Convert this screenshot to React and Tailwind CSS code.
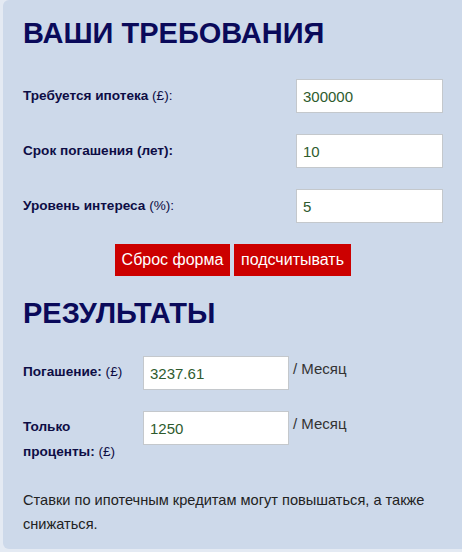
export default function App() {
  const font = { fontFamily: '"Liberation Sans", Arial, sans-serif' };
  return (
    <div className="w-[462px] h-[552px] bg-[#e4eaf3] pl-[3px] overflow-hidden" style={font}>
      <div className="w-[470px] h-[549px] bg-[#cdd9ea] rounded-l-[6px] pl-[20px] pr-[19px] pt-[18px]">
        <h1 className="text-[29px] leading-[30px] font-bold text-[#0a0a5a]">ВАШИ ТРЕБОВАНИЯ</h1>

        <form className="mt-[31px] w-[420px]">
          <div className="flex flex-col gap-[21px]">
            <Row label="Требуется ипотека" unit="(£):" value="300000" />
            <Row label="Срок погашения (лет):" value="10" />
            <Row label="Уровень интереса" unit="(%):" value="5" />
          </div>

          <div className="flex justify-center gap-[4px] mt-[21px]">
            <button type="reset" className="h-[32px] w-[115px] bg-[#cc0000] text-white text-[16px]">
              Сброс форма
            </button>
            <button type="button" className="h-[32px] w-[117px] bg-[#cc0000] text-white text-[16px]">
              подсчитывать
            </button>
          </div>
        </form>

        <h2 className="mt-[22px] text-[29px] leading-[30px] font-bold text-[#0a0a5a]">РЕЗУЛЬТАТЫ</h2>

        <div className="mt-[28px] flex flex-col gap-[21px]">
          <Result label="Погашение:" value="3237.61" />
          <Result label="Только проценты:" value="1250" />
        </div>

        <p className="mt-[24px] w-[420px] text-[14.6px] leading-[24px] text-[#222]">
          Ставки по ипотечным кредитам могут повышаться, а также снижаться.
        </p>
      </div>
    </div>
  );
}

function Row({ label, unit, value }) {
  return (
    <div className="flex items-center justify-between">
      <label className="text-[13.6px] text-[#0d0d45]">
        <b>{label}</b> {unit}
      </label>
      <input
        defaultValue={value}
        className="w-[147px] h-[34px] bg-white border border-[#c4c8cc] px-[6px] text-[15px] text-[#2e5b2e] outline-none"
      />
    </div>
  );
}

function Result({ label, value }) {
  return (
    <div className="flex items-start">
      <div className="w-[120px] shrink-0 pr-[12px] pt-[3px]">
        <label className="text-[13.6px] leading-[25px] text-[#0d0d45]">
          <b>{label}</b> (£)
        </label>
      </div>
      <input
        defaultValue={value}
        className="w-[146px] h-[34px] bg-white border border-[#c4c8cc] px-[6px] text-[15px] text-[#2e5b2e] outline-none"
      />
      <span className="ml-[4px] pt-[3px] text-[15px] leading-[20px] text-[#333]">/ Месяц</span>
    </div>
  );
}
